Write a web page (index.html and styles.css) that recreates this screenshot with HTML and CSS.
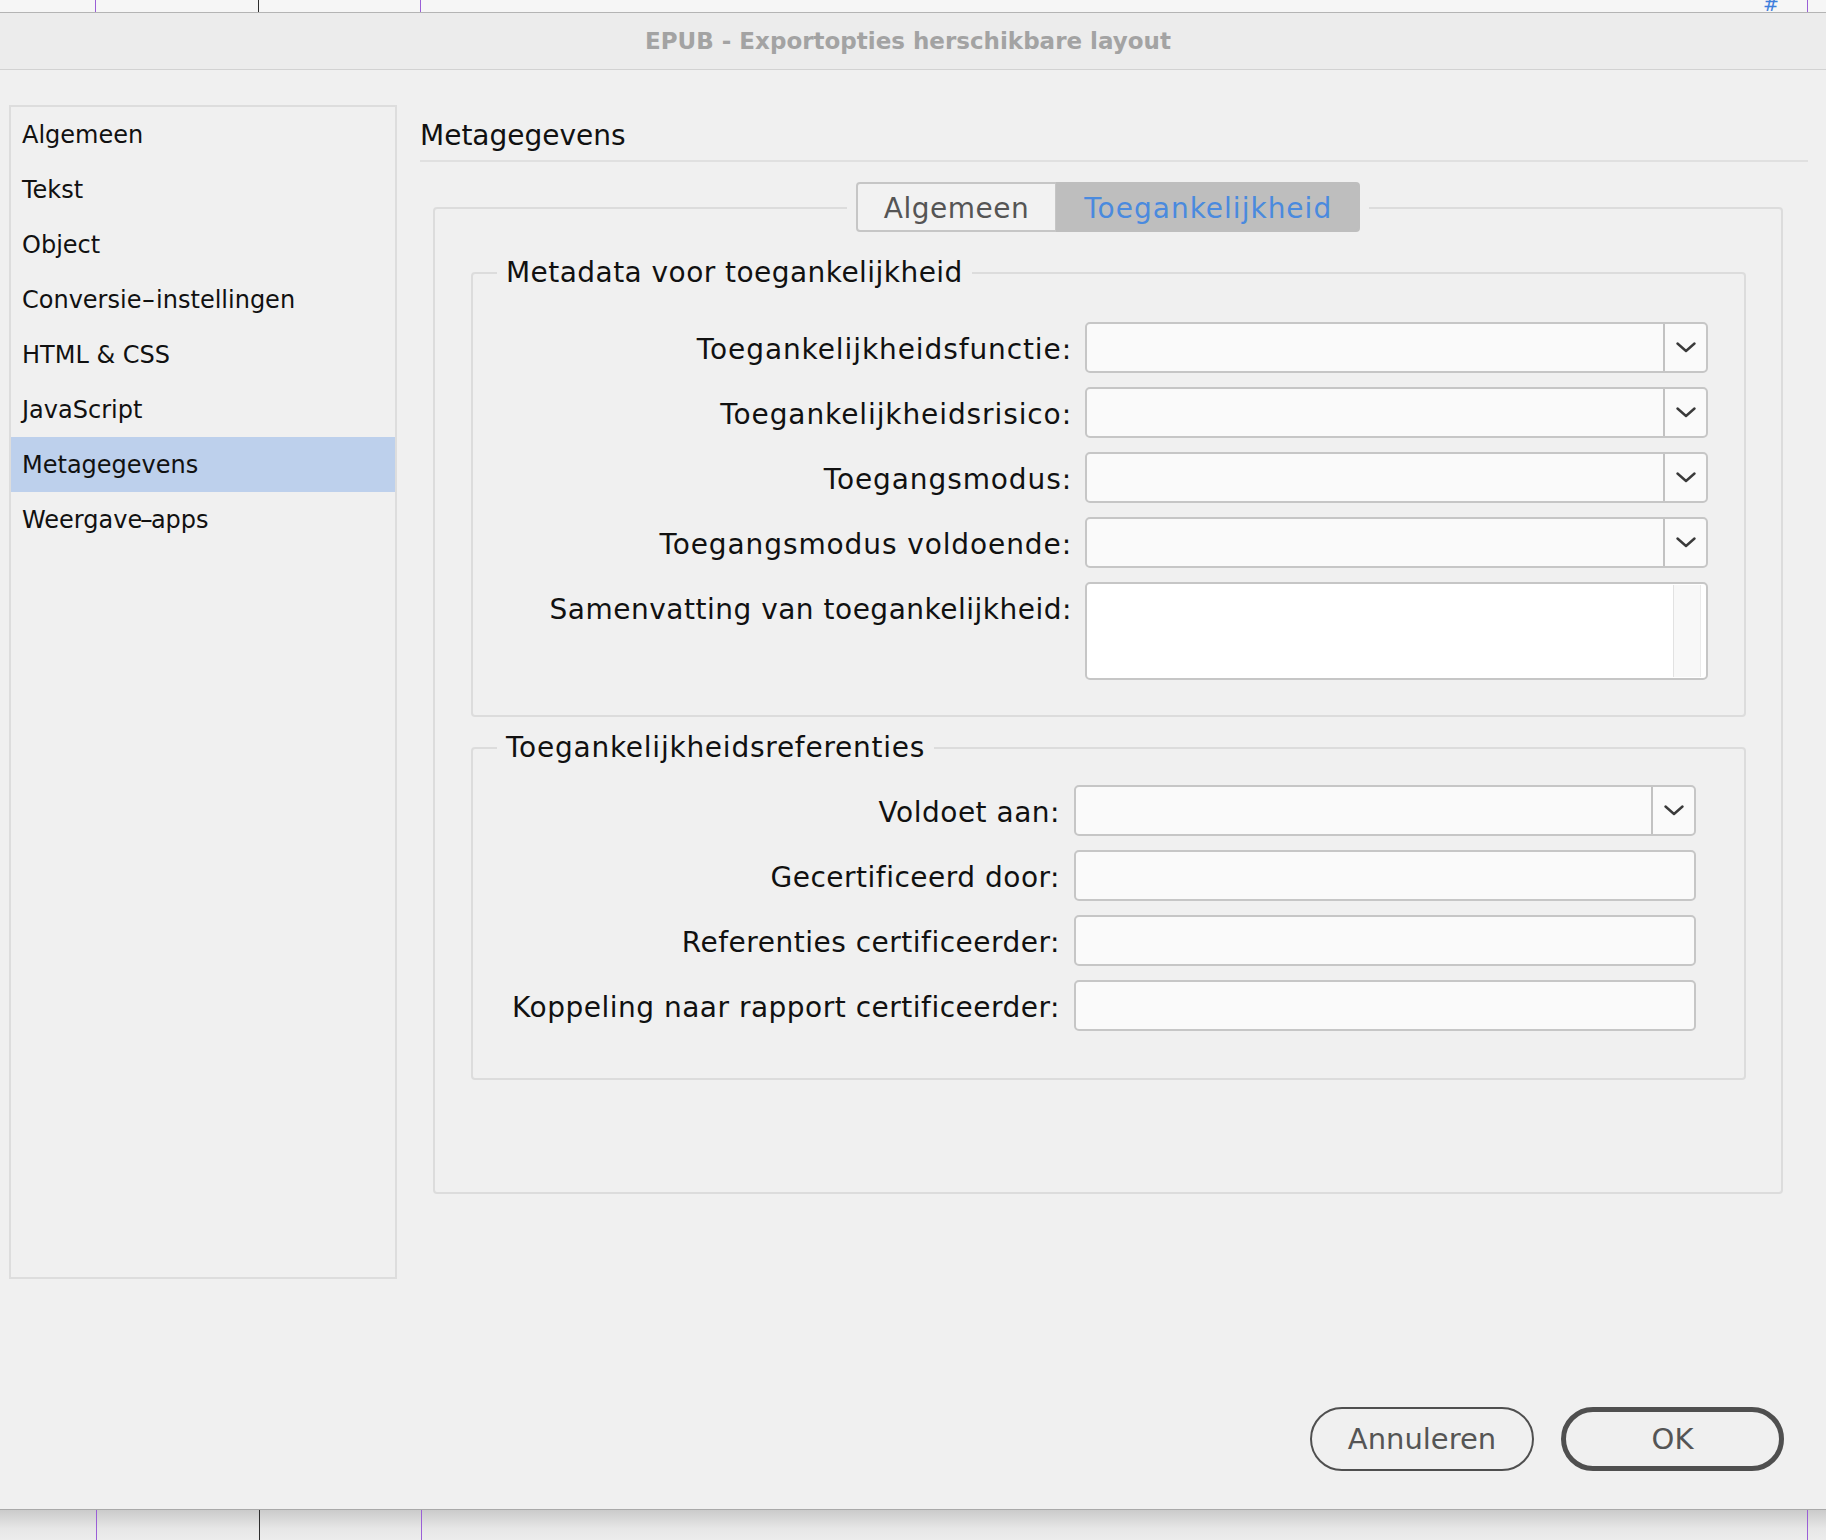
FILE: index.html
```html
<!DOCTYPE html>
<html lang="nl">
<head>
<meta charset="utf-8">
<title>EPUB - Exportopties herschikbare layout</title>
<link rel="stylesheet" href="styles.css">
</head>
<body>
<div class="doc-top"><span class="doc-hash">#</span></div>
<div class="dialog">
  <div class="titlebar">EPUB - Exportopties herschikbare layout</div>
  <div class="dialog-body">
    <div class="content">
      <ul class="sidebar">
        <li>Algemeen</li>
        <li>Tekst</li>
        <li>Object</li>
        <li>Conversie<span class="dash dash-wide">-</span>instellingen</li>
        <li>HTML &amp; CSS</li>
        <li>JavaScript</li>
        <li class="active">Metagegevens</li>
        <li>Weergave<span class="dash">-</span>apps</li>
      </ul>
      <div class="main">
        <h2 class="section-title">Metagegevens</h2>
        <div class="tabs">
          <div class="tab-group">
            <span class="tab">Algemeen</span><span class="tab tab-active">Toegankelijkheid</span>
          </div>
        </div>
        <div class="tab-panel">
          <div class="group group-meta">
            <div class="group-title title-meta">Metadata voor toegankelijkheid</div>
            <div class="form form-meta">
              <label class="label">Toegankelijkheidsfunctie:</label>
              <div class="select"><div class="select-value"></div><div class="select-btn"><svg width="20" height="11" viewBox="0 0 20 11"><polyline points="1.5,1.5 10,9 18.5,1.5" fill="none" stroke="#3a3a3a" stroke-width="2.4" stroke-linecap="round" stroke-linejoin="round"/></svg></div></div>
              <label class="label">Toegankelijkheidsrisico:</label>
              <div class="select"><div class="select-value"></div><div class="select-btn"><svg width="20" height="11" viewBox="0 0 20 11"><polyline points="1.5,1.5 10,9 18.5,1.5" fill="none" stroke="#3a3a3a" stroke-width="2.4" stroke-linecap="round" stroke-linejoin="round"/></svg></div></div>
              <label class="label">Toegangsmodus:</label>
              <div class="select"><div class="select-value"></div><div class="select-btn"><svg width="20" height="11" viewBox="0 0 20 11"><polyline points="1.5,1.5 10,9 18.5,1.5" fill="none" stroke="#3a3a3a" stroke-width="2.4" stroke-linecap="round" stroke-linejoin="round"/></svg></div></div>
              <label class="label">Toegangsmodus voldoende:</label>
              <div class="select"><div class="select-value"></div><div class="select-btn"><svg width="20" height="11" viewBox="0 0 20 11"><polyline points="1.5,1.5 10,9 18.5,1.5" fill="none" stroke="#3a3a3a" stroke-width="2.4" stroke-linecap="round" stroke-linejoin="round"/></svg></div></div>
              <label class="label label-top label-tight">Samenvatting van toegankelijkheid:</label>
              <div class="textarea"><div class="scroll-track"></div></div>
            </div>
          </div>
          <div class="group group-refs">
            <div class="group-title title-refs">Toegankelijkheidsreferenties</div>
            <div class="form form-refs">
              <label class="label label-tight">Voldoet aan:</label>
              <div class="select"><div class="select-value"></div><div class="select-btn"><svg width="20" height="11" viewBox="0 0 20 11"><polyline points="1.5,1.5 10,9 18.5,1.5" fill="none" stroke="#3a3a3a" stroke-width="2.4" stroke-linecap="round" stroke-linejoin="round"/></svg></div></div>
              <label class="label label-tight">Gecertificeerd door:</label>
              <div class="input"></div>
              <label class="label label-tight">Referenties certificeerder:</label>
              <div class="input"></div>
              <label class="label label-tight">Koppeling naar rapport certificeerder:</label>
              <div class="input"></div>
            </div>
          </div>
        </div>
      </div>
    </div>
    <div class="footer">
      <button class="btn btn-cancel">Annuleren</button>
      <button class="btn btn-ok">OK</button>
    </div>
  </div>
</div>
<div class="doc-bottom"></div>
</body>
</html>
```
FILE: styles.css
```css
html, body {
  margin: 0;
  padding: 0;
}
body {
  width: 1826px;
  height: 1540px;
  overflow: hidden;
  background: #f0f0f0;
  font-family: "DejaVu Sans", "Liberation Sans", sans-serif;
  color: #111;
}

/* document behind the dialog */
.doc-top {
  position: relative;
  height: 12px;
  overflow: hidden;
  background:
    linear-gradient(#9a5fd6, #9a5fd6) 95px 0 / 1px 100% no-repeat,
    linear-gradient(#2e2e2e, #2e2e2e) 258px 0 / 1px 100% no-repeat,
    linear-gradient(#9a5fd6, #9a5fd6) 420px 0 / 1px 100% no-repeat,
    linear-gradient(#9a5fd6, #9a5fd6) 1807px 0 / 1px 100% no-repeat,
    #f6f6f6;
}
.doc-hash {
  position: absolute;
  left: 1763px;
  top: -6px;
  font-size: 19px;
  line-height: 20px;
  color: #3f7fdc;
}
.doc-bottom {
  height: 30px;
  border-top: 1px solid #a9a9a9;
  background:
    linear-gradient(#9a5fd6, #9a5fd6) 96px 0 / 1px 100% no-repeat,
    linear-gradient(#2e2e2e, #2e2e2e) 259px 0 / 1px 100% no-repeat,
    linear-gradient(#9a5fd6, #9a5fd6) 421px 0 / 1px 100% no-repeat,
    linear-gradient(#9a5fd6, #9a5fd6) 1807px 0 / 1px 100% no-repeat,
    linear-gradient(#cbcbcb, #e6e6e6 60%, #ececec);
}

/* dialog */
.dialog {
  height: 1496px;
  border-top: 1px solid #b4b4b4;
  background: #f0f0f0;
  display: flex;
  flex-direction: column;
}
.titlebar {
  height: 56px;
  line-height: 56px;
  padding-right: 10px;
  border-bottom: 1px solid #d2d2d2;
  background: #ececec;
  text-align: center;
  font-weight: bold;
  font-size: 23px;
  color: #a3a3a3;
}
.dialog-body {
  flex: 1;
  display: flex;
  flex-direction: column;
}
.content {
  display: flex;
  gap: 23px;
  padding: 35px 0 0 9px;
  height: 1174px;
}

/* sidebar */
.sidebar {
  list-style: none;
  margin: 0;
  padding: 0;
  width: 388px;
  height: 1174px;
  box-sizing: border-box;
  border: 2px solid #dddddd;
  font-size: 24px;
}
.sidebar li {
  height: 55px;
  box-sizing: border-box;
  padding: 2px 0 0 11px;
  line-height: 53px;
  color: #111;
}
.sidebar li.active {
  background: #bdd0ec;
}
.dash {
  display: inline-block;
  transform: scaleX(1.6);
}
.dash-wide {
  margin: 0 3px;
}

/* main */
.main {
  width: 1388px;
}
.section-title {
  margin: 0;
  padding-top: 6px;
  height: 49px;
  line-height: 49px;
  font-size: 28px;
  font-weight: normal;
  border-bottom: 2px solid #e0e0e0;
}
.tabs {
  position: relative;
  z-index: 1;
  display: flex;
  justify-content: center;
  margin: 20px 25px -25px 13px;
}
.tab-group {
  display: flex;
  padding: 0 9px;
  background: #f0f0f0;
}
.tab {
  height: 50px;
  box-sizing: border-box;
  padding: 4px 26px 0;
  line-height: 42px;
  font-size: 28px;
  color: #555;
  background: #f2f2f2;
  border: 2px solid #c6c6c6;
}
.tab:first-child {
  border-radius: 4px 0 0 4px;
  border-right-width: 1px;
  letter-spacing: 0.5px;
}
.tab-active {
  color: #4a8ade;
  background: #bebebe;
  border-color: #bebebe;
  border-radius: 0 4px 4px 0;
  letter-spacing: 1px;
}
.tab-panel {
  margin: 0 25px 0 13px;
  height: 987px;
  box-sizing: border-box;
  border: 2px solid #dcdcdc;
  border-radius: 4px;
  padding: 63px 35px 0 36px;
}

/* groups */
.group {
  border: 2px solid #dcdcdc;
  border-radius: 4px;
}
.group-refs {
  margin-top: 30px;
}
.group-title {
  width: fit-content;
  margin: -18px 0 0 24px;
  padding: 0 9px;
  background: #f0f0f0;
  font-size: 28px;
  line-height: 34px;
  color: #111;
}
.title-meta {
  letter-spacing: 0.45px;
}
.title-refs {
  letter-spacing: 0.75px;
}
.form {
  display: grid;
  row-gap: 14px;
}
.form-meta {
  grid-template-columns: 1fr 623px;
  column-gap: 13px;
  padding: 32px 36px 35px 0;
}
.form-refs {
  grid-template-columns: 1fr 622px;
  column-gap: 14px;
  padding: 20px 48px 47px 0;
}
.label {
  height: 51px;
  box-sizing: border-box;
  padding-top: 4px;
  line-height: 47px;
  text-align: right;
  font-size: 28px;
  letter-spacing: 0.9px;
  color: #111;
  white-space: nowrap;
}
.label-tight {
  letter-spacing: 0.5px;
}
.label-top {
  align-self: start;
}
.select,
.input {
  height: 51px;
  box-sizing: border-box;
  border: 2px solid #c6c6c6;
  border-radius: 5px;
  background: #fafafa;
}
.select {
  display: flex;
}
.select-value {
  flex: 1;
}
.select-btn {
  width: 43px;
  box-sizing: border-box;
  border-left: 2px solid #c2c2c2;
  display: flex;
  align-items: center;
  justify-content: center;
}
.select-btn svg {
  display: block;
}
.textarea {
  height: 98px;
  box-sizing: border-box;
  border: 2px solid #c6c6c6;
  border-radius: 5px;
  background: #fff;
  display: flex;
  justify-content: flex-end;
  padding: 1px 5px 1px 0;
}
.scroll-track {
  width: 28px;
  box-sizing: border-box;
  background: #f8f8f8;
  border-left: 1px solid #e2e2e2;
  border-right: 1px solid #eaeaea;
}

/* footer */
.footer {
  display: flex;
  justify-content: flex-end;
  gap: 27px;
  padding: 128px 42px 0 0;
}
.btn {
  height: 64px;
  box-sizing: border-box;
  border-radius: 32px;
  background: transparent;
  font-family: "DejaVu Sans", "Liberation Sans", sans-serif;
  font-size: 29px;
  color: #555;
  padding: 0;
}
.btn-cancel {
  width: 224px;
  border: 2px solid #4f4f4f;
}
.btn-ok {
  width: 223px;
  border: 5px solid #4f4f4f;
}
```
